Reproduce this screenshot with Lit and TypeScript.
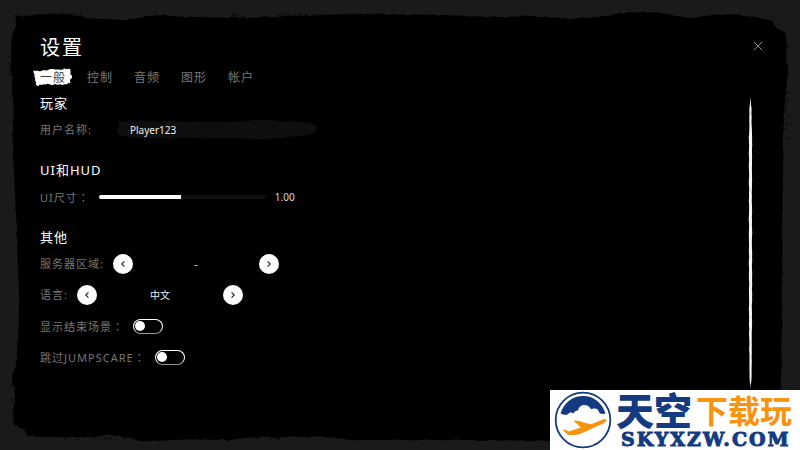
import { LitElement, html, css, svg } from "lit";
import { customElement, property, state } from "lit/decorators.js";

type Point = [number, number];

/** Small repeatable noise source, so the brush strokes look the same on every render. */
function noise(seed: number) {
  let s = seed;
  return () => {
    s = (s * 16807) % 2147483647;
    return s / 2147483647 - 0.5;
  };
}

/** Closed outline through the points, with a ragged edge like dry paint. */
function brushPath(points: Point[], step: number, jitter: number, seed: number) {
  const rnd = noise(seed);
  const out: string[] = [];
  points.forEach(([x, y], i) => {
    const [nx, ny] = points[(i + 1) % points.length];
    const n = Math.max(1, Math.round(Math.hypot(nx - x, ny - y) / step));
    for (let k = 0; k < n; k++) {
      const px = x + ((nx - x) * k) / n + rnd() * jitter;
      const py = y + ((ny - y) * k) / n + rnd() * jitter;
      out.push(`${px.toFixed(1)} ${py.toFixed(1)}`);
    }
  });
  return `M${out.join("L")}Z`;
}

/** Loose flecks of paint scattered in a box. */
function flecks(x: number, y: number, w: number, h: number, count: number, seed: number) {
  const rnd = noise(seed);
  let d = "";
  for (let i = 0; i < count; i++) {
    const fx = x + (rnd() + 0.5) * w;
    const fy = y + (rnd() + 0.5) * h;
    const l = 1 + (rnd() + 0.5) * 2;
    d += `M${fx.toFixed(1)} ${fy.toFixed(1)}h${l.toFixed(1)}v1h-${l.toFixed(1)}z`;
  }
  return d;
}

const PANEL: Point[] = [
  [15, 15], [24, 17], [40, 14], [70, 14], [90, 18], [120, 20], [150, 16], [165, 15], [180, 17],
  [250, 18], [290, 16], [350, 14], [430, 15], [500, 17], [530, 16], [570, 19], [600, 17],
  [620, 13], [650, 12], [665, 14], [690, 18], [715, 15], [730, 14], [755, 17], [772, 21],
  [776, 28], [785, 33], [787, 40], [786, 60], [788, 70], [785, 100], [783, 130], [783, 180],
  [782, 250], [782, 320], [781, 390], [780, 436], [640, 441], [550, 441], [450, 440], [350, 440],
  [325, 437], [260, 437], [230, 440], [205, 439], [165, 440], [145, 442], [130, 438], [110, 435],
  [90, 437], [50, 437], [27, 436], [24, 430], [14, 425], [13, 415], [15, 395], [12, 375],
  [16, 365], [18, 340], [19, 300], [17, 240], [15, 200], [13, 150], [13, 100], [11, 70],
  [11, 50], [12, 35], [16, 25],
];

const panelShape = brushPath(PANEL, 3, 1.4, 71);
const panelFlecks =
  flecks(16, 13, 70, 5, 40, 50021) + flecks(230, 13, 210, 4, 50, 90017) +
  flecks(8, 40, 5, 40, 10, 130043) + flecks(10, 370, 6, 55, 24, 170029) +
  flecks(784, 40, 3, 100, 20, 210011) + flecks(60, 437, 220, 3, 40, 250007);
const fieldShape = brushPath(
  [[2, 2], [40, 1], [110, 2], [140, 0], [190, 2], [201, 6], [198, 13], [186, 16], [150, 19],
   [90, 18], [16, 18], [1, 14]], 4, 1.6, 33);
const tabShape = brushPath(
  [[1, 3], [14, 2], [22, 1], [37, 1], [37, 6], [39, 8], [37, 15], [26, 17], [12, 16], [3, 18],
   [2, 10]], 2, 1.6, 47);
const barShape = brushPath(
  [[2.5, 0], [3.5, 12], [4, 40], [4, 120], [4, 220], [3.5, 280], [2.5, 293], [1.5, 280],
   [1, 220], [1, 40], [1.5, 12]],
  4, 0.4, 59);

const focusRing = css`
  :focus-visible {
    outline: 1px solid #8ab4ff;
    outline-offset: 2px;
  }
`;

@customElement("value-stepper")
class ValueStepper extends LitElement {
  @property() value = "";
  @property() label = "";

  static styles = [focusRing, css`
    :host {
      display: flex;
      align-items: center;
      justify-content: space-between;
      width: 166px;
    }
    .step {
      display: grid;
      place-items: center;
      width: 20px;
      height: 20px;
      padding: 0;
      border: 0;
      border-radius: 50%;
      background: #fff;
      cursor: pointer;
    }
    .arrow {
      width: 10px;
      height: 10px;
      fill: none;
      stroke: #222;
      stroke-width: 1.1;
    }
    .value {
      font-size: 10px;
      color: #eee;
    }
  `];

  render() {
    return html`
      <button class="step" aria-label=${`${this.label} ‹`}>
        <svg class="arrow" viewBox="0 0 10 10"><path d="M6.4 2.4 3.8 5l2.6 2.6" /></svg>
      </button>
      <span class="value">${this.value}</span>
      <button class="step" aria-label=${`${this.label} ›`}>
        <svg class="arrow" viewBox="0 0 10 10"><path d="M3.6 2.4 6.2 5 3.6 7.6" /></svg>
      </button>
    `;
  }
}

@customElement("site-badge")
class SiteBadge extends LitElement {
  static styles = css`
    :host {
      display: flex;
      align-items: center;
      gap: 4px;
      box-sizing: border-box;
      width: 250px;
      height: 60px;
      padding-left: 4px;
      background: #fff;
      color: #143a80;
      white-space: nowrap;
    }
    .logo {
      flex: none;
      width: 58px;
      height: 58px;
    }
    .words {
      display: flex;
      flex-direction: column;
    }
    .name {
      display: flex;
      align-items: center;
      gap: 4px;
      height: 38px;
      font: 900 38px/38px "Noto Sans CJK SC", sans-serif;
    }
    .accent {
      font-size: 32px;
      line-height: 32px;
      font-weight: 700;
      color: #f7930f;
    }
    .site {
      padding-left: 5px;
      font: bold 19px/22px "DejaVu Serif", serif;
      letter-spacing: 2px;
      -webkit-text-stroke: 1px #143a80;
    }
  `;

  render() {
    return html`
      <svg class="logo" viewBox="0 0 58 58">
        <circle cx="29" cy="29" r="27.3" fill="#fff" stroke="#143a80" stroke-width="1.8" />
        <path fill="#143a80" d="M6.5 22.5C10 11 19 5 29 5s19 6 22.500 17.500c-2.500.8-4.500.5-6-.5-.5-3-3-5-5.500-4.500-1.500.2-2 .5-3 .8-1.500-3-4-4.300-7-4.300-3.500.2-5.500 2.500-6 5.500-2.500.2-3.500 1-4.500 3-1.500-1.600-4-1.500-5.500.5-1 1.200-4 1.200-7.500-.5z" />
        <path fill="#f7930f" d="M9 38.500c2-.3 4 .5 5.500 2L27 36.500l-7.500-6.800c3-.7 6 .1 9.500 1.600l8 2 11-4.500c2.500-.8 4.500-.6 4.500.5-.2 2-4 3.500-6.500 4.700l-8 3.500L26 43c-3 1-9 1.500-11.500.7C12 42.500 10 40.500 9 38.500z" />
      </svg>
      <div class="words">
        <div class="name">天空<span class="accent">下载玩</span></div>
        <div class="site">SKYXZW.COM</div>
      </div>
    `;
  }
}

@customElement("app-root")
class AppRoot extends LitElement {
  @state() private tab = 0;
  @state() private scale = 1;

  private tabs = ["一般", "控制", "音频", "图形", "帐户"];

  static styles = [focusRing, css`
    :host {
      position: relative;
      box-sizing: border-box;
      min-height: 100vh;
      padding: 33px 37px 60px 40px;
      background: #1a1a1a;
      color: #fff;
      font-family: "Noto Sans", "Noto Sans CJK SC", sans-serif;
      font-size: 11px;
      line-height: 20px;
      display: flex;
      flex-direction: column;
      isolation: isolate;
    }
    button,
    input {
      font: inherit;
      letter-spacing: inherit;
      margin: 0;
    }
    .backdrop {
      position: absolute;
      inset: 0;
      width: 100%;
      height: 100%;
      z-index: -1;
    }
    .header {
      display: flex;
      align-items: flex-start;
      justify-content: space-between;
      height: 30px;
    }
    .title {
      margin: 0;
      font-size: 20px;
      line-height: 30px;
      font-weight: 400;
      letter-spacing: 2px;
    }
    .close {
      display: grid;
      padding: 8px 0;
      border: 0;
      background: none;
      cursor: pointer;
    }
    .cross {
      width: 10px;
      height: 10px;
      stroke: #8a8a8a;
    }
    .tabs {
      display: flex;
      gap: 21px;
      height: 30px;
      align-items: center;
      font-size: 12px;
      letter-spacing: 1px;
    }
    .tab {
      position: relative;
      isolation: isolate;
      padding: 0;
      border: 0;
      background: none;
      color: #777;
      cursor: pointer;
    }
    .tab.active {
      color: #444;
    }
    .stroke {
      position: absolute;
      z-index: -1;
      inset: 0 -6px 0 -7px;
      width: 39px;
      height: 20px;
      fill: #fff;
    }
    .body {
      display: flex;
      flex: 1;
      justify-content: space-between;
      padding-right: 10px;
    }
    .sections {
      display: flex;
      flex-direction: column;
      gap: 20px;
    }
    .section {
      display: flex;
      flex-direction: column;
      gap: 11px;
    }
    .heading {
      margin: 0 0 -4px;
      font-size: 13px;
      font-weight: 400;
      letter-spacing: 1px;
    }
    .row {
      display: flex;
      align-items: center;
      gap: 9px;
      height: 20px;
    }
    .label {
      color: #777;
      letter-spacing: 1px;
    }
    .colon {
      font-family: "Noto Sans CJK TC", sans-serif;
    }
    .field {
      position: relative;
      isolation: isolate;
      display: flex;
      margin-left: 16px;
    }
    .paint {
      position: absolute;
      z-index: -1;
      inset: 0;
      width: 100%;
      height: 100%;
      fill: #0e0e0e;
    }
    .text {
      box-sizing: border-box;
      width: 202px;
      height: 20px;
      padding: 0 13px;
      border: 0;
      background: none;
      color: #eee;
      font-size: 10px;
    }
    .range {
      appearance: none;
      width: 167px;
      height: 4px;
      border-radius: 2px;
      cursor: pointer;
    }
    .range::-webkit-slider-thumb {
      appearance: none;
      width: 4px;
      height: 4px;
      background: transparent;
    }
    .amount {
      font-size: 10px;
      color: #ddd;
    }
    .toggle {
      appearance: none;
      display: flex;
      align-items: center;
      box-sizing: border-box;
      width: 30px;
      height: 15px;
      padding: 0 1px;
      border: 1px solid #fff;
      border-bottom-color: #999;
      border-radius: 8px;
      cursor: pointer;
    }
    .toggle::before {
      content: "";
      width: 10px;
      height: 10px;
      border-radius: 50%;
      background: #fff;
    }
    .toggle:checked {
      justify-content: flex-end;
    }
    .scroll {
      width: 5px;
      height: auto;
      padding-top: 4px;
      fill: #f4f4f4;
    }
    .badge {
      position: absolute;
      right: 0;
      bottom: 0;
    }
  `];

  private onScale(e: Event) {
    this.scale = Number((e.target as HTMLInputElement).value);
  }

  render() {
    const fill = ((this.scale - 0.04) / 1.96) * 100;
    const colon = html`<span class="colon" lang="zh-TW">：</span>`;
    return html`
      <svg class="backdrop" viewBox="0 0 800 450" preserveAspectRatio="none" aria-hidden="true">
        ${svg`<path d=${panelShape} /><path d=${panelFlecks} />`}
      </svg>

      <header class="header">
        <h1 class="title">设置</h1>
        <button class="close" aria-label="关闭">
          <svg class="cross" viewBox="0 0 10 10"><path d="M.7.7l8.6 8.6M9.3.7.7 9.3" /></svg>
        </button>
      </header>

      <nav class="tabs">
        ${this.tabs.map((name, i) => html`
          <button class="tab ${i === this.tab ? "active" : ""}" @click=${() => (this.tab = i)}>
            ${i === this.tab
              ? html`<svg class="stroke" viewBox="0 0 39 20" aria-hidden="true"><path d=${tabShape} /></svg>`
              : null}${name}
          </button>`)}
      </nav>

      <main class="body">
        <div class="sections">
          <section class="section">
            <h2 class="heading">玩家</h2>
            <div class="row">
              <label class="label" for="user">用户名称:</label>
              <div class="field">
                <svg class="paint" viewBox="0 0 202 20" preserveAspectRatio="none" aria-hidden="true">
                  <path d=${fieldShape} />
                </svg>
                <input class="text" id="user" type="text" value="Player123" />
              </div>
            </div>
          </section>

          <section class="section">
            <h2 class="heading">UI和HUD</h2>
            <div class="row">
              <label class="label" for="scale">UI尺寸${colon}</label>
              <input class="range" id="scale" type="range" min="0.04" max="2" step="0.02"
                .value=${String(this.scale)} @input=${this.onScale}
                style="background: linear-gradient(to right, #fff ${fill}%, #111 ${fill}%)" />
              <output class="amount" for="scale">${this.scale.toFixed(2)}</output>
            </div>
          </section>

          <section class="section">
            <h2 class="heading">其他</h2>
            <div class="row">
              <span class="label">服务器区域:</span>
              <value-stepper label="服务器区域" value="-"></value-stepper>
            </div>
            <div class="row">
              <span class="label">语言:</span>
              <value-stepper label="语言" value="中文"></value-stepper>
            </div>
            <div class="row">
              <label class="label" for="ending">显示结束场景${colon}</label>
              <input class="toggle" id="ending" type="checkbox" />
            </div>
            <div class="row">
              <label class="label" for="jumpscare">跳过JUMPSCARE${colon}</label>
              <input class="toggle" id="jumpscare" type="checkbox" />
            </div>
          </section>
        </div>
        <svg class="scroll" viewBox="0 0 5 293" preserveAspectRatio="none" aria-hidden="true">
          <path d=${barShape} />
        </svg>
      </main>

      <site-badge class="badge"></site-badge>
    `;
  }
}
